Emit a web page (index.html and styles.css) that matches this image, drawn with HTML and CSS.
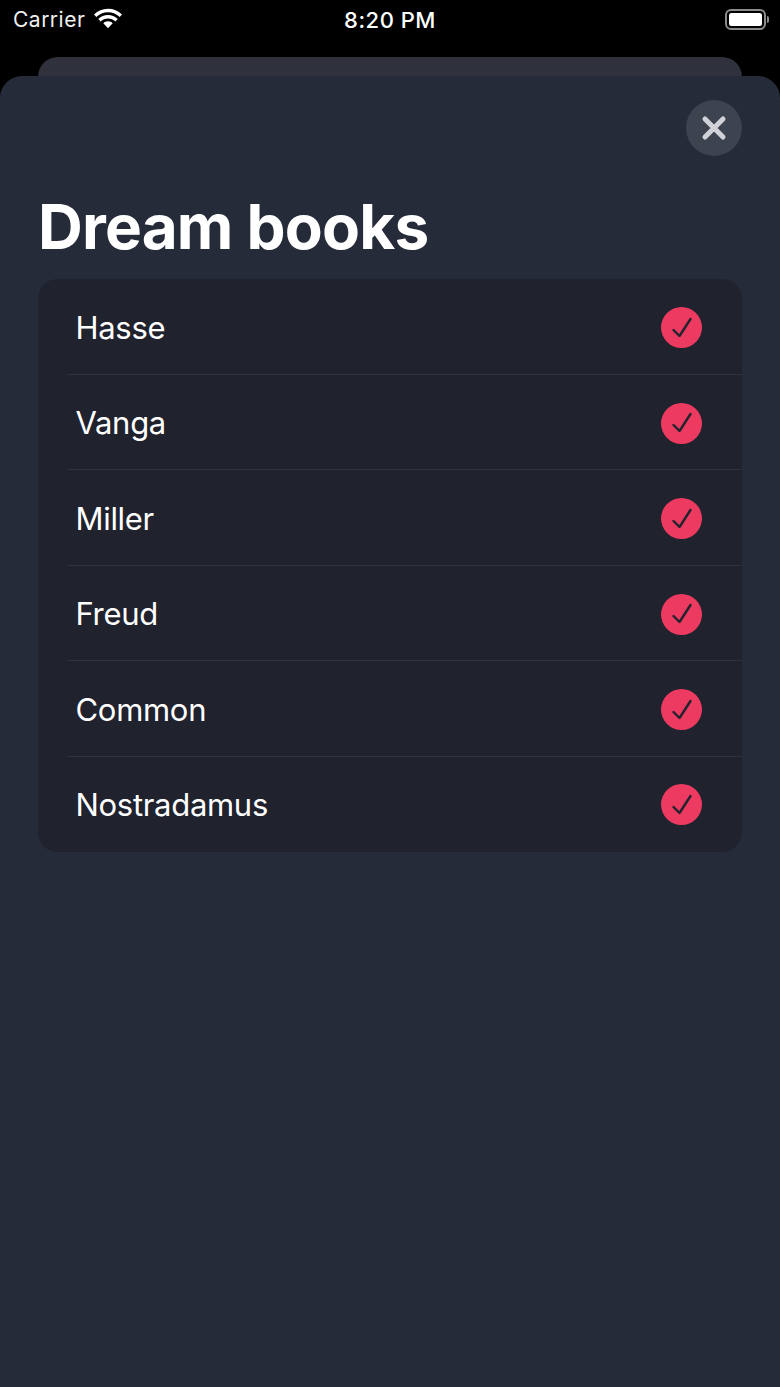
FILE: index.html
```html
<!DOCTYPE html>
<html lang="en">
<head>
<meta charset="utf-8">
<title>Dream books</title>
<link rel="stylesheet" href="styles.css">
</head>
<body>
<div class="screen">
  <header class="status">
    <div class="status-left">
      <span class="carrier">Carrier</span>
      <svg class="wifi" width="28" height="21" viewBox="2.600 1.800 22.800 15.800"><path d="M14 4.600c3.700 0 7 1.400 9.500 3.800l1.900-2A16.600 16.600 0 0 0 14 1.800C9.600 1.800 5.600 3.500 2.600 6.400l1.900 2C7 6 10.300 4.600 14 4.600z" fill="#fff"/><path d="M14 9.700c2.300 0 4.400.9 6 2.400l1.900-2A11.400 11.400 0 0 0 14 6.900c-3 0-5.800 1.200-7.900 3.200l1.900 2c1.600-1.500 3.700-2.400 6-2.400z" fill="#fff"/><path d="M14 12c-1.500 0-2.800.6-3.800 1.500L14 17.600l3.800-4.100c-1-.9-2.300-1.500-3.800-1.500z" fill="#fff"/></svg>
    </div>
    <span class="clock">8:20 PM</span>
    <div class="battery"><div class="battery-body"><div class="battery-fill"></div></div><div class="battery-cap"></div></div>
  </header>
  <div class="back-sheet"></div>
  <main class="sheet">
    <div class="sheet-top">
      <button class="close" aria-label="Close">
        <svg width="28" height="28" viewBox="0 0 28 28"><path d="M5 5l18 18M23 5L5 23" stroke="#d1d2d9" stroke-width="5" stroke-linecap="round" fill="none"/></svg>
      </button>
    </div>
    <h1 class="title">Dream books</h1>
    <ul class="list">
      <li class="row"><span class="name">Hasse</span><span class="tick"><svg width="26" height="26" viewBox="0 0 26 26"><path d="M4.500 15l6 6L21.500 4" stroke="#21232f" stroke-width="2.400" stroke-linecap="round" stroke-linejoin="round" fill="none"/></svg></span></li>
      <li class="row"><span class="name">Vanga</span><span class="tick"><svg width="26" height="26" viewBox="0 0 26 26"><path d="M4.500 15l6 6L21.500 4" stroke="#21232f" stroke-width="2.400" stroke-linecap="round" stroke-linejoin="round" fill="none"/></svg></span></li>
      <li class="row"><span class="name">Miller</span><span class="tick"><svg width="26" height="26" viewBox="0 0 26 26"><path d="M4.500 15l6 6L21.500 4" stroke="#21232f" stroke-width="2.400" stroke-linecap="round" stroke-linejoin="round" fill="none"/></svg></span></li>
      <li class="row"><span class="name">Freud</span><span class="tick"><svg width="26" height="26" viewBox="0 0 26 26"><path d="M4.500 15l6 6L21.500 4" stroke="#21232f" stroke-width="2.400" stroke-linecap="round" stroke-linejoin="round" fill="none"/></svg></span></li>
      <li class="row"><span class="name">Common</span><span class="tick"><svg width="26" height="26" viewBox="0 0 26 26"><path d="M4.500 15l6 6L21.500 4" stroke="#21232f" stroke-width="2.400" stroke-linecap="round" stroke-linejoin="round" fill="none"/></svg></span></li>
      <li class="row"><span class="name">Nostradamus</span><span class="tick"><svg width="26" height="26" viewBox="0 0 26 26"><path d="M4.500 15l6 6L21.500 4" stroke="#21232f" stroke-width="2.400" stroke-linecap="round" stroke-linejoin="round" fill="none"/></svg></span></li>
    </ul>
  </main>
</div>
</body>
</html>
```
FILE: styles.css
```css
* { box-sizing: border-box; }
html, body { margin: 0; padding: 0; background: #000; }
body { font-family: Inter, "Liberation Sans", sans-serif; color: #fff; }
.screen { width: 780px; height: 1387px; overflow: hidden; display: flex; flex-direction: column; background: #000; }
.status { height: 40px; flex: none; display: flex; align-items: center; justify-content: space-between; padding: 0 11px 0 13px; position: relative; }
.status-left { display: flex; align-items: center; gap: 9px; }
.carrier { font-size: 21px; line-height: 40px; color: #f0f0f0; letter-spacing: 0.5px; }
.wifi { display: block; margin-top: -4px; }
.clock { position: absolute; left: 0; right: 0; text-align: center; font-size: 22px; font-weight: 500; line-height: 40px; letter-spacing: 0.5px; }
.battery { display: flex; align-items: center; gap: 1px; margin-top: -1px; }
.battery-body { width: 41px; height: 21px; border: 2px solid #8b8b8b; border-radius: 6px; padding: 2px; }
.battery-fill { width: 100%; height: 100%; background: #fff; border-radius: 2.500px; }
.battery-cap { width: 2px; height: 7px; background: #8b8b8b; border-radius: 0 2px 2px 0; }
.back-sheet { flex: none; height: 36px; margin: 17px 38px -17px; background: #2f313c; border-radius: 20px 20px 0 0; }
.sheet { flex: 1; background: #252b38; border-radius: 22px 22px 0 0; padding: 24px 38px 0; position: relative; }
.sheet-top { display: flex; justify-content: flex-end; }
.close { width: 56px; height: 56px; border: 0; padding: 0; border-radius: 50%; background: #3e4350; display: flex; align-items: center; justify-content: center; }
.title { margin: 34px 0 0; font-size: 62px; line-height: 73px; font-weight: 700; letter-spacing: -0.8px; color: #fff; }
.list { list-style: none; margin: 16px 0 0; padding: 0; background: #20222e; border-radius: 20px; }
.row { height: 95.500px; display: flex; align-items: center; justify-content: space-between; margin-left: 29px; padding: 3px 40px 0 9px; border-bottom: 1px solid #30323e; }
.row:last-child { border-bottom: 0; padding-top: 1px; }
.name { font-size: 31px; line-height: 40px; color: #fff; letter-spacing: -0.3px; margin-left: -0.5px; }
.tick { width: 41px; height: 41px; border-radius: 50%; background: #ec3a60; display: flex; align-items: center; justify-content: center; }
.tick svg { display: block; width: 26px; height: 26px; }
```
